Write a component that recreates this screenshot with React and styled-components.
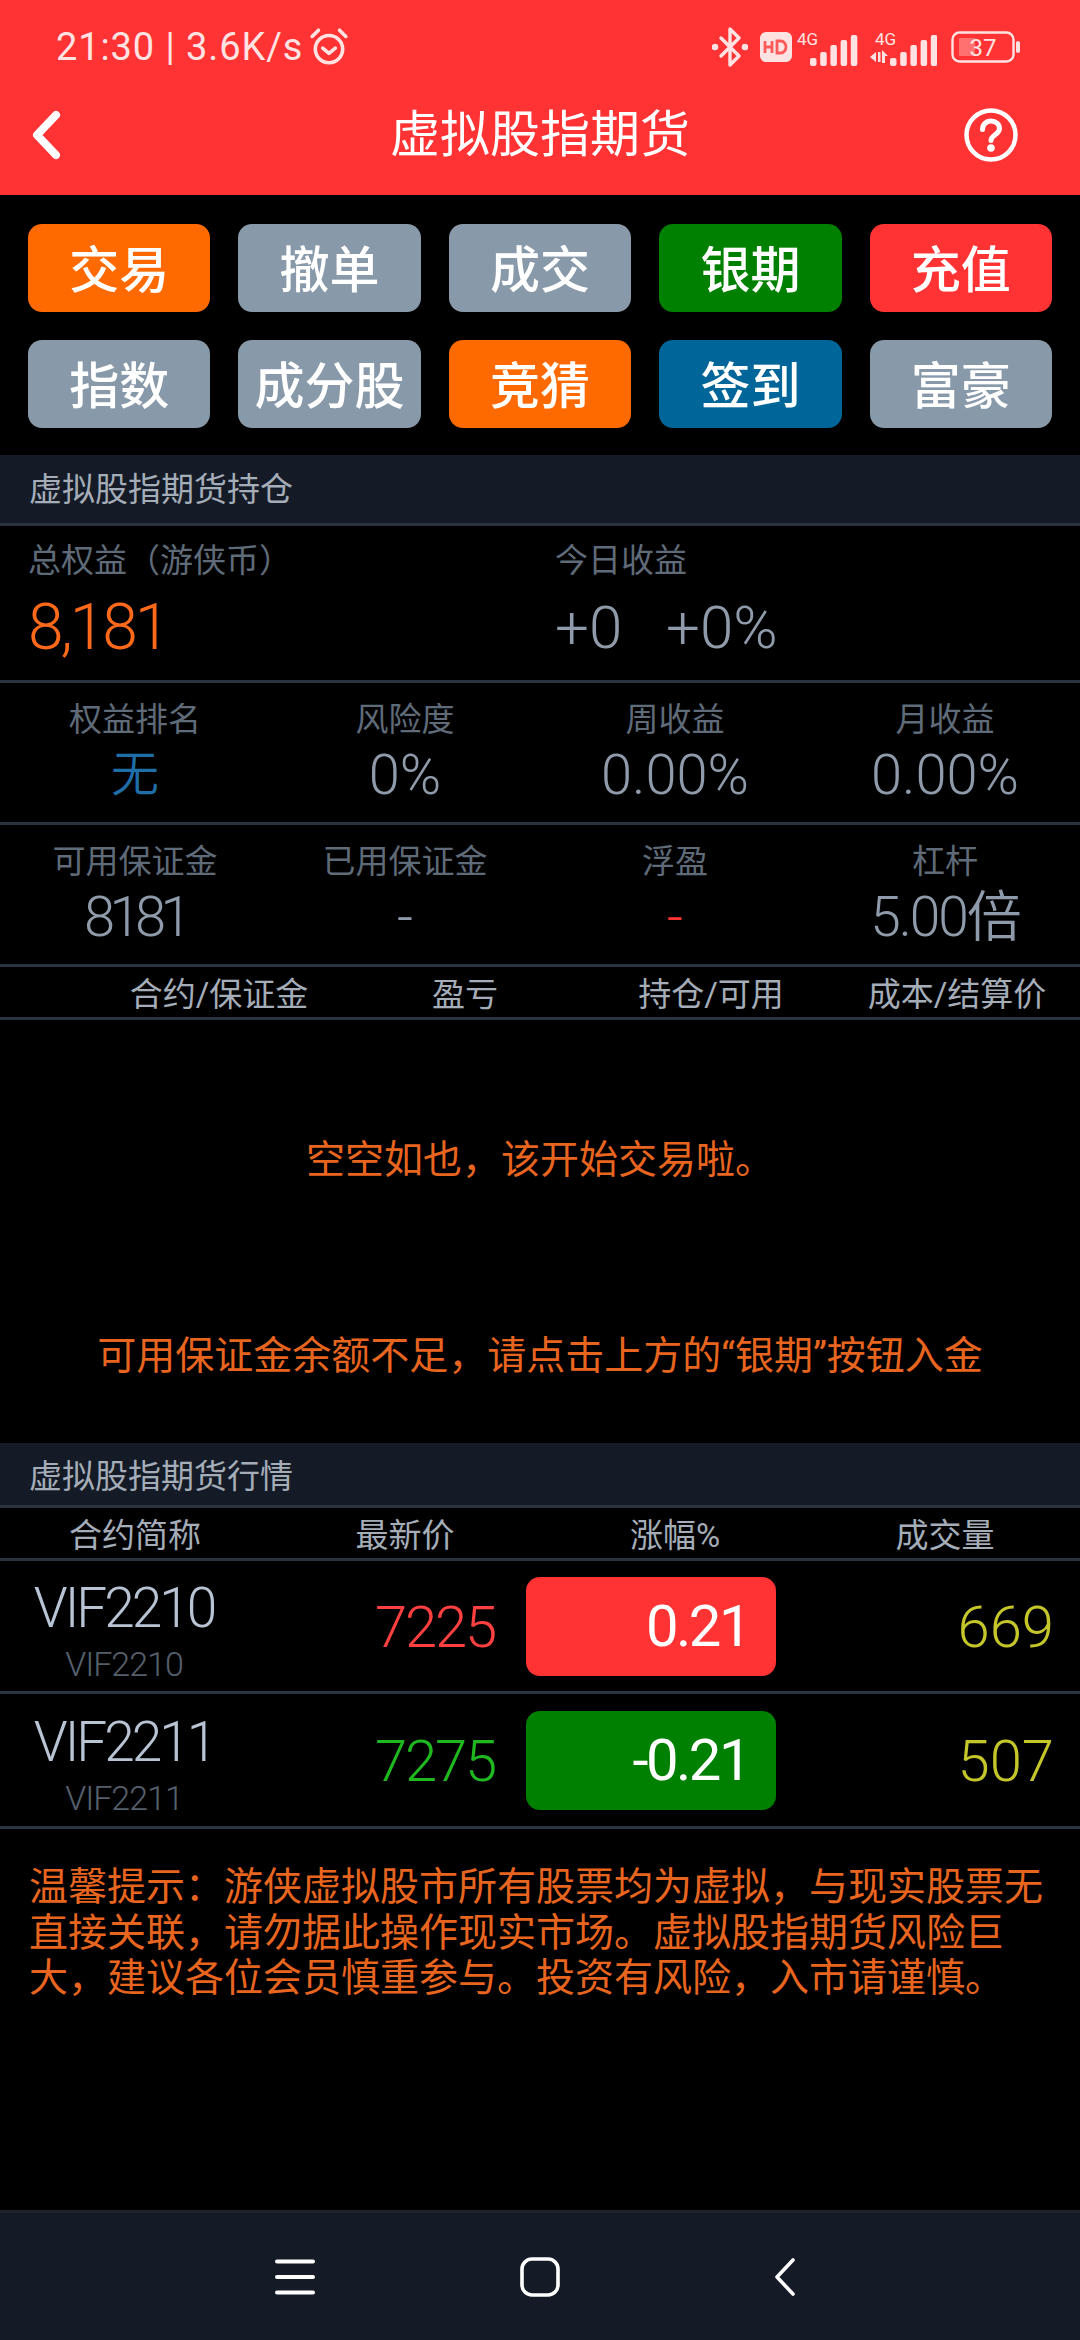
import React from 'react';
import styled, { createGlobalStyle } from 'styled-components';

const GlobalStyle = createGlobalStyle`
  html, body {
    margin: 0;
    padding: 0;
    background: #000;
  }
  * {
    box-sizing: border-box;
  }
`;

const FONT = `Roboto, "Noto Sans CJK SC", sans-serif`;
const LINE = '#2a3340';

const Page = styled.div`
  width: 1080px;
  height: 2340px;
  background: #000;
  display: flex;
  flex-direction: column;
  font-family: ${FONT};
  overflow: hidden;
`;

const Header = styled.header`
  height: 195px;
  background: #ff3334;
  color: #fff;
  flex: none;
`;

const StatusBar = styled.div`
  height: 86px;
  padding: 8px 60px 0 56px;
  display: flex;
  align-items: center;
  justify-content: space-between;
`;

const StatusLeft = styled.div`
  display: flex;
  align-items: center;
  gap: 6px;
  font-size: 38px;
  color: #ffe3e3;
  letter-spacing: 0.9px;
`;

const StatusRight = styled.div`
  display: flex;
  align-items: center;
`;

const TitleBar = styled.div`
  height: 109px;
  padding: 0 62px 12px 30px;
  display: grid;
  grid-template-columns: 1fr auto 1fr;
  align-items: center;
`;

const Title = styled.h1`
  margin: 0;
  font-size: 50px;
  font-weight: 400;
  line-height: 1;
  transform: translateX(16px);
`;

const HelpSlot = styled.div`
  display: flex;
  justify-content: flex-end;
`;

const ButtonGrid = styled.div`
  padding: 29px 28px 27px;
  display: grid;
  grid-template-columns: repeat(5, 1fr);
  gap: 28px;
`;

const ActionButton = styled.div`
  height: 88px;
  padding-bottom: 4px;
  border-radius: 14px;
  background: ${props => props.$bg};
  color: #fff;
  font-size: 50px;
  font-weight: 500;
  display: flex;
  align-items: center;
  justify-content: center;
`;

const SectionTitle = styled.div`
  height: ${props => props.$height}px;
  padding: 0 0 ${props => props.$lift}px 29px;
  background: #141b26;
  border-bottom: 3px solid ${LINE};
  color: #a4adb8;
  font-size: 33px;
  display: flex;
  align-items: center;
`;

const EquityRow = styled.div`
  height: 157px;
  display: grid;
  grid-template-columns: 527px 1fr;
  padding: 13px 0 0 28px;
  border-bottom: 3px solid ${LINE};
`;

const StatsRow = styled.div`
  height: 142px;
  display: grid;
  grid-template-columns: repeat(4, 1fr);
  padding-top: 15px;
  border-bottom: 3px solid ${LINE};
  text-align: center;
`;

const Label = styled.div`
  color: #5f6b78;
  font-size: 33px;
  line-height: 44px;
`;

const Value = styled.div`
  padding-top: 1px;
  color: ${props => props.$color || '#8f9baa'};
  font-size: ${props => props.$size || 56}px;
  font-weight: 350;
  letter-spacing: ${props => props.$track || 0}px;
  line-height: ${props => props.$lineHeight || 64}px;
  white-space: pre;
`;

const ColumnHead = styled.div`
  height: 53px;
  padding-left: ${props => props.$inset}px;
  display: grid;
  grid-template-columns: repeat(4, 1fr);
  align-items: center;
  text-align: center;
  color: #a4adb8;
  font-size: 33px;
  border-bottom: 3px solid ${LINE};
`;

const EmptyPanel = styled.div`
  height: 423px;
  flex: none;
  display: flex;
  flex-direction: column;
  align-items: center;
  padding-top: 115px;
  gap: 146px;
  color: #e8651f;
  font-size: 39px;
  line-height: 50px;
`;

const QuoteRow = styled.div`
  height: ${props => props.$height}px;
  display: grid;
  grid-template-columns: 248px 247px 281px 1fr;
  align-items: center;
  border-bottom: 3px solid ${LINE};
`;

const NameCell = styled.div`
  padding-top: 5px;
  text-align: center;
`;

const Name = styled.div`
  color: #b8c4d4;
  font-size: 55px;
  font-weight: 350;
  line-height: 70px;
  letter-spacing: -3px;
`;

const Code = styled.div`
  color: #56606d;
  font-size: 34px;
  font-weight: 350;
  line-height: 42px;
  letter-spacing: -1px;
`;

const Price = styled.div`
  padding-top: 2px;
  color: ${props => props.$color};
  font-size: 58px;
  font-weight: 350;
  letter-spacing: -2.2px;
  text-align: right;
`;

const ChangeBox = styled.div`
  margin-left: 31px;
  height: 99px;
  border-radius: 14px;
  background: ${props => props.$bg};
  color: #fff;
  font-size: 58px;
  letter-spacing: -2.5px;
  padding-right: 27px;
  display: flex;
  align-items: center;
  justify-content: flex-end;
`;

const Volume = styled.div`
  padding: 2px 26px 0 0;
  color: #c4c62a;
  font-size: 58px;
  font-weight: 350;
  text-align: right;
`;

const Notice = styled.p`
  margin: 0;
  padding: 36px 28px 0 29px;
  color: #e8651f;
  font-size: 39px;
  line-height: 45.5px;
`;

const Spacer = styled.div`
  flex: 1;
`;

const NavBar = styled.nav`
  height: 130px;
  flex: none;
  background: #141b26;
  border-top: 3px solid #1c212c;
  display: grid;
  grid-template-columns: repeat(3, 1fr);
  justify-items: center;
  align-items: center;
  padding: 0 173px;
`;

const AlarmIcon = () => (
  <svg width="40" height="40" viewBox="0 0 38 38" fill="none" stroke="#ffe3e3" strokeWidth="3.4" strokeLinecap="round" strokeLinejoin="round">
    <circle cx="19" cy="21" r="13" />
    <path d="M13 20l6 5 6-5" />
    <path d="M3 9l6-6M35 9l-6-6" />
  </svg>
);

const BluetoothIcon = () => (
  <svg width="36" height="40" viewBox="0 0 36 40" fill="none" stroke="#ffe3e3" strokeWidth="3.4" strokeLinejoin="round" strokeLinecap="round" style={{ marginRight: 12 }}>
    <path d="M9 11l18 18-9 9V2l9 9L9 29" />
    <circle cx="3" cy="20" r="1.6" fill="#ffe3e3" />
    <circle cx="33" cy="20" r="1.6" fill="#ffe3e3" />
  </svg>
);

const HdIcon = () => (
  <svg width="32" height="30" viewBox="0 0 32 30" style={{ marginRight: 5 }}>
    <rect width="32" height="30" rx="6" fill="#ffe3e3" />
    <path d="M5 9v12M5 15h7M12 9v12M17 9v12h3.500a5.500 6 0 0 0 0-12z" fill="none" stroke="#ff5a5a" strokeWidth="2.8" />
  </svg>
);

// signal strength with the network type above and optional up/down arrows
const SignalIcon = ({ arrows }) => (
  <svg width={arrows ? 67 : 61} height="40" viewBox={arrows ? '0 -4 67 40' : '0 -4 61 40'} fill="#ffe3e3" style={{ marginRight: arrows ? 14 : 12 }}>
    <text x={arrows ? 5 : 0} y="14" fontSize="17" fontFamily="Roboto, sans-serif">4G</text>
    {arrows && <path d="M0 26l6-5v10zM8 21h2.500v10H8zM12 19l6 6h-3v7h-3z" />}
    {[0, 1, 2, 3, 4].map(i => (
      <rect key={i} x={(arrows ? 20 : 13) + i * 10.2} y={[27, 21, 14, 9, 4][i]} width="6.5" height={[8, 14, 21, 26, 31][i]} rx="2" />
    ))}
  </svg>
);

const BatteryIcon = () => (
  <svg width="69" height="32" viewBox="0 0 69 32">
    <rect x="1.5" y="1.5" width="61" height="29" rx="7" fill="none" stroke="#ffe3e3" strokeWidth="2.4" />
    <rect x="8" y="7" width="16" height="18" fill="#ff7070" />
    <rect x="65" y="10" width="4" height="12" rx="2" fill="#ffe3e3" />
    <text x="32" y="25" fontSize="24" textAnchor="middle" fill="#ffe3e3" fontFamily="Roboto, sans-serif">37</text>
  </svg>
);

const BackIcon = () => (
  <svg width="32" height="50" viewBox="0 0 32 50" fill="none" stroke="#fff" strokeWidth="8" strokeLinecap="round" strokeLinejoin="round">
    <path d="M26 5L7 25l19 20" />
  </svg>
);

const HelpIcon = () => (
  <svg width="54" height="54" viewBox="0 0 54 54" fill="none" stroke="#fff">
    <circle cx="27" cy="27" r="24.5" strokeWidth="4.5" />
    <path d="M18.5 21.5c0-5 3.700-8.500 8.500-8.500s8.500 3.200 8.500 7.500c0 6-8.500 6.500-8.500 12" strokeWidth="5" strokeLinecap="round" />
    <circle cx="27" cy="40" r="3.800" fill="#fff" stroke="none" />
  </svg>
);

const MenuIcon = () => (
  <svg width="40" height="36" viewBox="0 0 40 36" fill="none" stroke="#fff" strokeWidth="4" strokeLinecap="round">
    <path d="M2 2.500h36M2 18h36M2 33.500h36" />
  </svg>
);

const HomeIcon = () => (
  <svg width="40" height="40" viewBox="0 0 40 40" fill="none" stroke="#fff" strokeWidth="3.6">
    <rect x="2" y="2" width="36" height="36" rx="10" />
  </svg>
);

const NavBackIcon = () => (
  <svg width="22" height="38" viewBox="0 0 22 38" fill="none" stroke="#fff" strokeWidth="3.6" strokeLinecap="round" strokeLinejoin="round">
    <path d="M19 2L3 19l16 17" />
  </svg>
);

const ORANGE = '#ff6a00';
const GREY = '#8899aa';

const buttons = [
  ['交易', ORANGE], ['撤单', GREY], ['成交', GREY], ['银期', '#008000'], ['充值', '#ff3333'],
  ['指数', GREY], ['成分股', GREY], ['竞猜', ORANGE], ['签到', '#006699'], ['富豪', GREY],
];

const rankStats = [
  { label: '权益排名', value: '无', color: '#1f6ea8', size: 48 },
  { label: '风险度', value: '0%' },
  { label: '周收益', value: '0.00%' },
  { label: '月收益', value: '0.00%' },
];

const marginStats = [
  { label: '可用保证金', value: '8181', track: -5.5 },
  { label: '已用保证金', value: '-' },
  { label: '浮盈', value: '-', color: '#ff3333' },
  { label: '杠杆', value: '5.00倍', track: -2, size: 55 },
];

const quotes = [
  { name: 'VIF2210', price: '7225', change: '0.21', volume: '669', color: '#ff4040', bg: '#ff3333', height: 133 },
  { name: 'VIF2211', price: '7275', change: '-0.21', volume: '507', color: '#1fb81f', bg: '#008000', height: 135 },
];

const Stats = ({ items }) => (
  <StatsRow>
    {items.map(item => (
      <div key={item.label}>
        <Label>{item.label}</Label>
        <Value $color={item.color} $size={item.size} $track={item.track}>{item.value}</Value>
      </div>
    ))}
  </StatsRow>
);

const App = () => (
  <Page>
    <GlobalStyle />
    <Header>
      <StatusBar>
        <StatusLeft>21:30 | 3.6K/s <AlarmIcon /></StatusLeft>
        <StatusRight>
          <BluetoothIcon />
          <HdIcon />
          <SignalIcon />
          <SignalIcon arrows />
          <BatteryIcon />
        </StatusRight>
      </StatusBar>
      <TitleBar>
        <BackIcon />
        <Title>虚拟股指期货</Title>
        <HelpSlot><HelpIcon /></HelpSlot>
      </TitleBar>
    </Header>

    <ButtonGrid>
      {buttons.map(([text, bg]) => (
        <ActionButton key={text} $bg={bg}>{text}</ActionButton>
      ))}
    </ButtonGrid>

    <SectionTitle $height={71} $lift={4}>虚拟股指期货持仓</SectionTitle>
    <EquityRow>
      <div>
        <Label>总权益（游侠币）</Label>
        <Value $color="#ff6a1a" $size={64} $track={-3} $lineHeight={88}>8,181</Value>
      </div>
      <div>
        <Label>今日收益</Label>
        <Value $size={60} $lineHeight={88}>{'+0   +0%'}</Value>
      </div>
    </EquityRow>
    <Stats items={rankStats} />
    <Stats items={marginStats} />
    <ColumnHead $inset={96}>
      <div>合约/保证金</div>
      <div>盈亏</div>
      <div>持仓/可用</div>
      <div>成本/结算价</div>
    </ColumnHead>

    <EmptyPanel>
      <div>空空如也，该开始交易啦。</div>
      <div>可用保证金余额不足，请点击上方的“银期”按钮入金</div>
    </EmptyPanel>

    <SectionTitle $height={65} $lift={0}>虚拟股指期货行情</SectionTitle>
    <ColumnHead $inset={0}>
      <div>合约简称</div>
      <div>最新价</div>
      <div>涨幅%</div>
      <div>成交量</div>
    </ColumnHead>
    {quotes.map(q => (
      <QuoteRow key={q.name} $height={q.height}>
        <NameCell>
          <Name>{q.name}</Name>
          <Code>{q.name}</Code>
        </NameCell>
        <Price $color={q.color}>{q.price}</Price>
        <ChangeBox $bg={q.bg}>{q.change}</ChangeBox>
        <Volume>{q.volume}</Volume>
      </QuoteRow>
    ))}

    <Notice>温馨提示：游侠虚拟股市所有股票均为虚拟，与现实股票无直接关联，请勿据此操作现实市场。虚拟股指期货风险巨大，建议各位会员慎重参与。投资有风险，入市请谨慎。</Notice>
    <Spacer />
    <NavBar>
      <MenuIcon />
      <HomeIcon />
      <NavBackIcon />
    </NavBar>
  </Page>
);

export default App;
